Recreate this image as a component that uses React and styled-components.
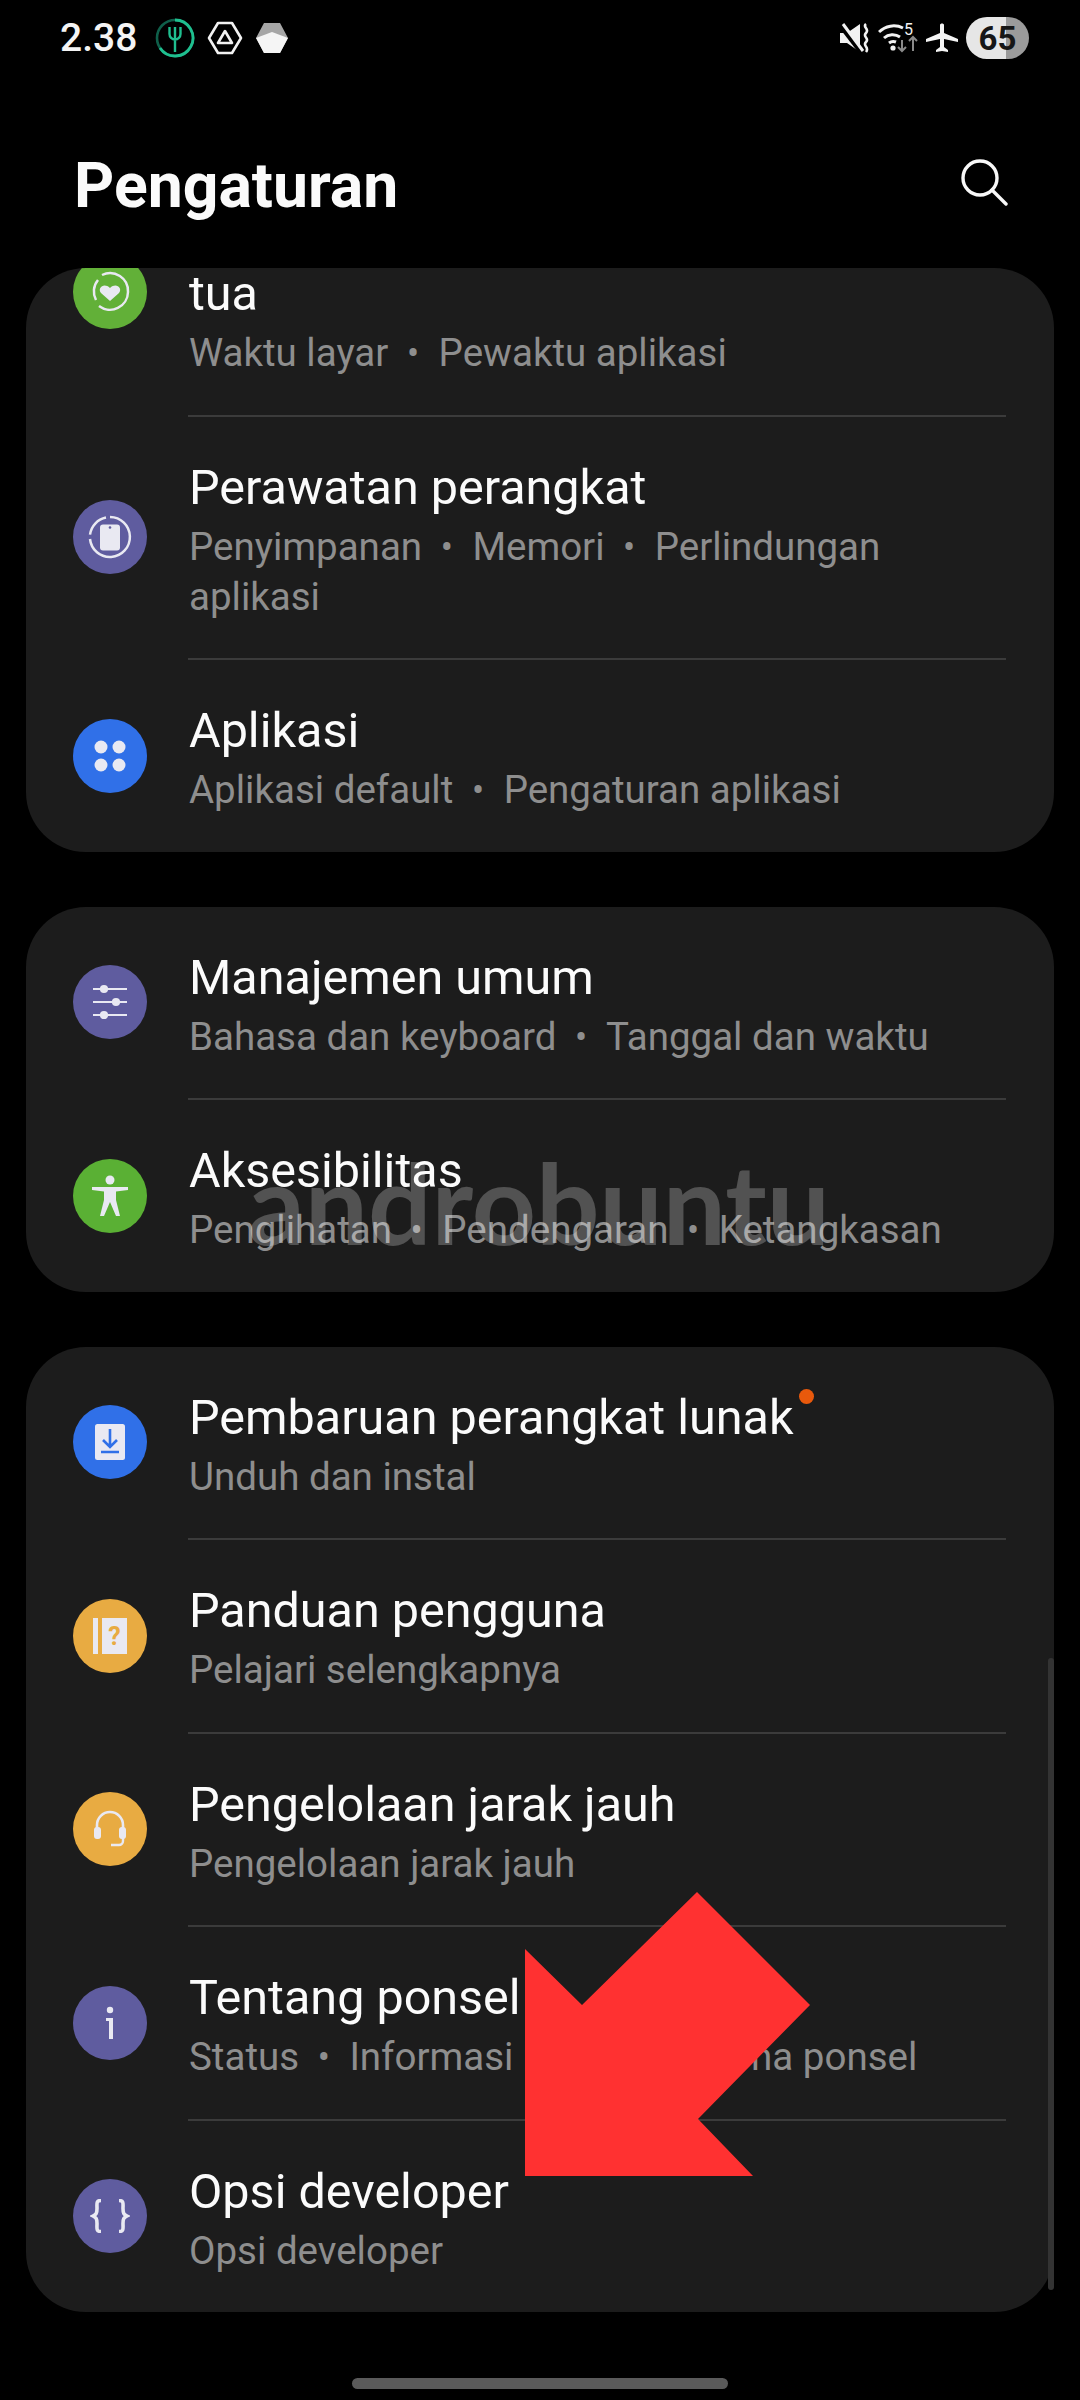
import React from 'react'
import styled, { createGlobalStyle } from 'styled-components'

const GlobalStyle = createGlobalStyle`
  html, body {
    margin: 0;
    background: #000000;
  }
  * {
    box-sizing: border-box;
  }
`

const Page = styled.div`
  position: relative;
  width: 1080px;
  height: 2400px;
  overflow: hidden;
  display: flex;
  flex-direction: column;
  background: #000000;
  color: #ffffff;
  font-family: Roboto, 'Liberation Sans', sans-serif;
`

const StatusBar = styled.div`
  height: 76px;
  padding: 0 51px 0 60px;
  display: flex;
  align-items: center;
  justify-content: space-between;
`

const StatusGroup = styled.div`
  display: flex;
  align-items: center;
  gap: ${props => props.$gap}px;
`

const Time = styled.span`
  font-size: 39px;
  font-weight: 500;
  color: #f4f4f4;
  margin-right: 6px;
`

const Battery = styled.div`
  width: 63px;
  height: 42px;
  border-radius: 21px;
  display: flex;
  align-items: center;
  justify-content: center;
  background: linear-gradient(90deg, #e6e6e6 0 40px, #9b9b9b 40px);
  color: #161616;
  font-size: 33px;
  font-weight: 700;
`

const Header = styled.header`
  height: 192px;
  padding: 26px 72px 0 74px;
  display: flex;
  align-items: center;
  justify-content: space-between;
`

const Title = styled.h1`
  margin: 0;
  font-size: 62.5px;
  font-weight: 700;
  color: #fafafa;
`

const SearchIcon = styled.svg`
  margin-top: -6px;
`

const Scroller = styled.div`
  position: relative;
  height: 2072px;
  margin: 0 26px;
  border-radius: 60px 60px 0 0;
  overflow: hidden;
`

const List = styled.div`
  margin-top: -99px;
  display: flex;
  flex-direction: column;
  gap: 55px;
`

const Card = styled.section`
  background: #1c1c1c;
  border-radius: 60px;
  overflow: hidden;
`

const Row = styled.div`
  padding: 44px 48px 36.5px 47px;
  display: flex;
  align-items: center;
  gap: 42px;
`

const Circle = styled.div`
  flex: none;
  width: 74px;
  height: 74px;
  border-radius: 50%;
  display: flex;
  align-items: center;
  justify-content: center;
  background: ${props => props.$bg};
  margin-top: -8px;
`

const RowText = styled.div`
  flex: 1;
  min-width: 0;
`

const RowTitle = styled.div`
  font-size: 48.5px;
  line-height: 54px;
  color: #fbfbfb;
`

const RowSub = styled.div`
  margin-top: 7px;
  font-size: 38.5px;
  line-height: 50px;
  color: #8e8e8e;
`

const Sep = styled.span`
  margin: 0 10px 0 9px;
  font-size: 36px;
  line-height: 0;
`

const Divider = styled.div`
  height: 2px;
  margin: 0 48px 0 162px;
  background: #3b3b3b;
`

const Dot = styled.span`
  display: inline-block;
  width: 15px;
  height: 15px;
  margin-left: 5px;
  margin-top: -2px;
  border-radius: 50%;
  background: #e8590c;
  vertical-align: top;
`

const ScrollThumb = styled.div`
  position: absolute;
  right: 0;
  top: 1390px;
  width: 6px;
  height: 632px;
  border-radius: 3px;
  background: #333333;
`

const NavBar = styled.div`
  flex: 1;
  display: flex;
  align-items: center;
  justify-content: center;
`

const HomePill = styled.div`
  width: 376px;
  height: 11px;
  margin-top: 26px;
  border-radius: 6px;
  background: #5a5a5a;
`

const Watermark = styled.div`
  position: absolute;
  left: 248px;
  top: 1132px;
  font-family: Lato, sans-serif;
  font-size: 112px;
  font-weight: 700;
  line-height: 140px;
  color: rgba(255, 255, 255, 0.24);
  pointer-events: none;
`

const ArrowMark = styled.svg`
  position: absolute;
  left: 525px;
  top: 1892px;
`

const ic = '#e9e9f2'

const HeartIcon = () => (
  <svg width="48" height="48" viewBox="0 0 48 48" fill="none">
    <path d="M10 32a18 18 0 0 1 2-20M16 7a18 18 0 0 1 26 17 18 18 0 0 1-29 14" stroke={ic} strokeWidth="2.500" />
    <path d="M24 33l-9-8c-4-5 3-11 9-5 6-6 13 0 9 5z" fill={ic} />
  </svg>
)

const CareIcon = () => (
  <svg width="46" height="46" viewBox="0 0 46 46" fill="none">
    <path d="M19 3.600a20 20 0 0 0-16 17M3 25a20 20 0 1 0 20-22" stroke={ic} strokeWidth="2.500" />
    <rect x="13" y="10.500" width="20" height="26" rx="3" fill={ic} />
    <circle cx="23" cy="13.500" r="1.300" fill="#5f5c9f" />
  </svg>
)

const AppsIcon = () => (
  <svg width="34" height="34" viewBox="0 0 34 34" fill={ic}>
    <circle cx="8" cy="8" r="6.500" />
    <circle cx="26" cy="8" r="6.500" />
    <circle cx="8" cy="26" r="6.500" />
    <circle cx="26" cy="26" r="6.500" />
  </svg>
)

const SlidersIcon = () => (
  <svg width="36" height="36" viewBox="0 0 36 36" fill={ic} stroke={ic} strokeWidth="2.200">
    <path d="M1 5h34M1 18h34M1 31h34" />
    <circle cx="12" cy="5" r="3" />
    <circle cx="24" cy="18" r="3" />
    <circle cx="12" cy="31" r="3" />
  </svg>
)

const AccessIcon = () => (
  <svg width="38" height="42" viewBox="0 0 38 42" fill={ic}>
    <circle cx="19" cy="5" r="4.500" />
    <path d="M1 12h36v3l-12 1.500V25l4 16h-4l-6-14-6 14H9l4-16v-8.500L1 15z" />
  </svg>
)

const UpdateIcon = () => (
  <svg width="30" height="36" viewBox="0 0 30 36">
    <rect width="30" height="36" rx="2.500" fill={ic} />
    <path d="M15 5v17M8 16l7 7 7-7M6 28h18" fill="none" stroke="#3070e8" strokeWidth="2.600" />
  </svg>
)

const GuideIcon = () => (
  <svg width="34" height="36" viewBox="0 0 34 36" fill={ic}>
    <rect width="5" height="36" />
    <rect x="9" width="25" height="36" />
    <text x="21.500" y="27" fontFamily="Roboto" fontSize="25" fontWeight="700" fill="#e8ab42" textAnchor="middle">?</text>
  </svg>
)

const HeadsetIcon = () => (
  <svg width="34" height="38" viewBox="0 0 34 38" fill="none">
    <path d="M4 18v-3a13 13 0 0 1 26 0v3" stroke={ic} strokeWidth="2.600" />
    <rect x="1" y="17" width="7" height="12" rx="3" fill={ic} />
    <rect x="26" y="17" width="7" height="12" rx="3" fill={ic} />
    <path d="M30 28v3a4 4 0 0 1-4 4h-8" stroke={ic} strokeWidth="2.400" />
  </svg>
)

const InfoIcon = () => (
  <svg width="12" height="34" viewBox="0 0 12 34" fill={ic}>
    <circle cx="6" cy="4" r="3.200" />
    <path d="M2 12h7v21H5V15H2z" />
  </svg>
)

const BracesIcon = () => (
  <svg width="40" height="34" viewBox="0 0 40 34" fill="none" stroke={ic} strokeWidth="3.600">
    <path d="M11 1.500c-5 0-4 3-4 8 0 5-1 6-4 7.500 3 1.500 4 2.500 4 7.500s-1 8 4 8" />
    <path d="M29 1.500c5 0 4 3 4 8 0 5 1 6 4 7.500-3 1.500-4 2.500-4 7.500s1 8-4 8" />
  </svg>
)

const cards = [
  [
    {
      icon: <HeartIcon />,
      bg: '#62b038',
      title: 'Kesehatan digital dan kontrol orang tua',
      sub: ['Waktu layar', 'Pewaktu aplikasi'],
    },
    {
      icon: <CareIcon />,
      bg: '#5f5c9f',
      title: 'Perawatan perangkat',
      sub: ['Penyimpanan', 'Memori', 'Perlindungan aplikasi'],
    },
    {
      icon: <AppsIcon />,
      bg: '#3070e8',
      title: 'Aplikasi',
      sub: ['Aplikasi default', 'Pengaturan aplikasi'],
    },
  ],
  [
    {
      icon: <SlidersIcon />,
      bg: '#5f5c9f',
      title: 'Manajemen umum',
      sub: ['Bahasa dan keyboard', 'Tanggal dan waktu'],
    },
    {
      icon: <AccessIcon />,
      bg: '#5ab034',
      title: 'Aksesibilitas',
      sub: ['Penglihatan', 'Pendengaran', 'Ketangkasan'],
    },
  ],
  [
    {
      icon: <UpdateIcon />,
      bg: '#3070e8',
      title: 'Pembaruan perangkat lunak',
      dot: true,
      sub: ['Unduh dan instal'],
    },
    {
      icon: <GuideIcon />,
      bg: '#e8ab42',
      title: 'Panduan pengguna',
      sub: ['Pelajari selengkapnya'],
    },
    {
      icon: <HeadsetIcon />,
      bg: '#e8ab42',
      title: 'Pengelolaan jarak jauh',
      sub: ['Pengelolaan jarak jauh'],
    },
    {
      icon: <InfoIcon />,
      bg: '#5f5c9f',
      title: 'Tentang ponsel',
      sub: ['Status', 'Informasi hukum', 'Nama ponsel'],
    },
    {
      icon: <BracesIcon />,
      bg: '#5f5c9f',
      title: 'Opsi developer',
      sub: ['Opsi developer'],
    },
  ],
]

const StatusLeftIcons = () => (
  <>
    <svg width="40" height="40" viewBox="0 0 40 40" fill="none">
      <circle cx="20" cy="20" r="18" stroke="#0f5f4a" strokeWidth="2.600" />
      <path d="M20 2a18 18 0 1 1-15 28" stroke="#1fbf8f" strokeWidth="2.800" />
      <path d="M20 9v25M14.500 9v7a5.500 5.500 0 0 0 11 0V9" stroke="#1fbf8f" strokeWidth="2.400" />
    </svg>
    <svg width="36" height="34" viewBox="0 0 36 34" fill="none" stroke="#f2f2f2" strokeWidth="2.600" strokeLinejoin="round">
      <path d="M11 2h14l9 15-9 15H11L2 17z" />
      <path d="M18 10l7 12H11z" />
    </svg>
    <svg width="34" height="34" viewBox="0 0 34 34">
      <path d="M9 2h16l8 15-8 15H9L1 17z" fill="#a6a6a6" />
      <path d="M17 11l16 6-8 15H9L1 17z" fill="#f5f5f5" />
    </svg>
  </>
)

const StatusRightIcons = () => (
  <>
    <svg width="30" height="30" viewBox="0 0 30 30" fill="#f2f2f2">
      <path d="M0 10h7L20 1v28L7 20H0z" />
      <path d="M1 3l20 26" stroke="#000" strokeWidth="5" />
      <path d="M3 1l20 27" stroke="#f2f2f2" strokeWidth="3" />
      <path d="M26 1c-4 3 4 5 0 9s4 5 0 9 4 5 0 10" fill="none" stroke="#f2f2f2" strokeWidth="2.600" />
    </svg>
    <svg width="40" height="30" viewBox="0 0 40 30" fill="none">
      <path d="M1 9a21 21 0 0 1 24-4M6 15a13 13 0 0 1 16-1M11 20a7 7 0 0 1 7-1" stroke="#f2f2f2" strokeWidth="3" />
      <circle cx="15" cy="25" r="2.600" fill="#f2f2f2" />
      <text x="26" y="12" fontFamily="Roboto" fontSize="16" fill="#f2f2f2">5</text>
      <path d="M24 17v11M20 24l4 4 4-4M35 28V14M31 18l4-4 4 4" stroke="#8a8a8a" strokeWidth="2" />
    </svg>
    <svg width="32" height="30" viewBox="0 0 32 30" fill="#f4f4f4">
      <path d="M14 2c0-2 4-2 4 0v8l14 6v3l-14-3v8l4 3v2l-6-1-6 1v-2l4-3v-8L0 19v-3l14-6z" />
    </svg>
  </>
)

const App = () => (
  <Page>
    <GlobalStyle />
    <StatusBar>
      <StatusGroup $gap={12}>
        <Time>2.38</Time>
        <StatusLeftIcons />
      </StatusGroup>
      <StatusGroup $gap={8}>
        <StatusRightIcons />
        <Battery>65</Battery>
      </StatusGroup>
    </StatusBar>
    <Header>
      <Title>Pengaturan</Title>
      <SearchIcon width="48" height="48" viewBox="0 0 48 48" fill="none" stroke="#f8f8f8" strokeWidth="3.400" strokeLinecap="round">
        <circle cx="20" cy="20" r="17" />
        <path d="M32 32l14 14" />
      </SearchIcon>
    </Header>
    <Scroller>
      <List>
        {cards.map((rows, c) => (
          <Card key={c}>
            {rows.map((row, r) => (
              <React.Fragment key={row.title}>
                {r > 0 && <Divider />}
                <Row>
                  <Circle $bg={row.bg}>{row.icon}</Circle>
                  <RowText>
                    <RowTitle>
                      {row.title}
                      {row.dot && <Dot />}
                    </RowTitle>
                    <RowSub>
                      {row.sub.map((part, i) => (
                        <React.Fragment key={part}>
                          {part}{' '}
                          {i < row.sub.length - 1 && <><Sep>•</Sep>{' '}</>}
                        </React.Fragment>
                      ))}
                    </RowSub>
                  </RowText>
                </Row>
              </React.Fragment>
            ))}
          </Card>
        ))}
      </List>
      <ScrollThumb />
    </Scroller>
    <NavBar>
      <HomePill />
    </NavBar>
    <Watermark>androbuntu</Watermark>
    <ArrowMark width="285" height="285" viewBox="0 0 285 285">
      <path d="M172 0L285 113 173 227 228 284H0V57L57 113z" fill="#ff3131" />
    </ArrowMark>
  </Page>
)

export default App
